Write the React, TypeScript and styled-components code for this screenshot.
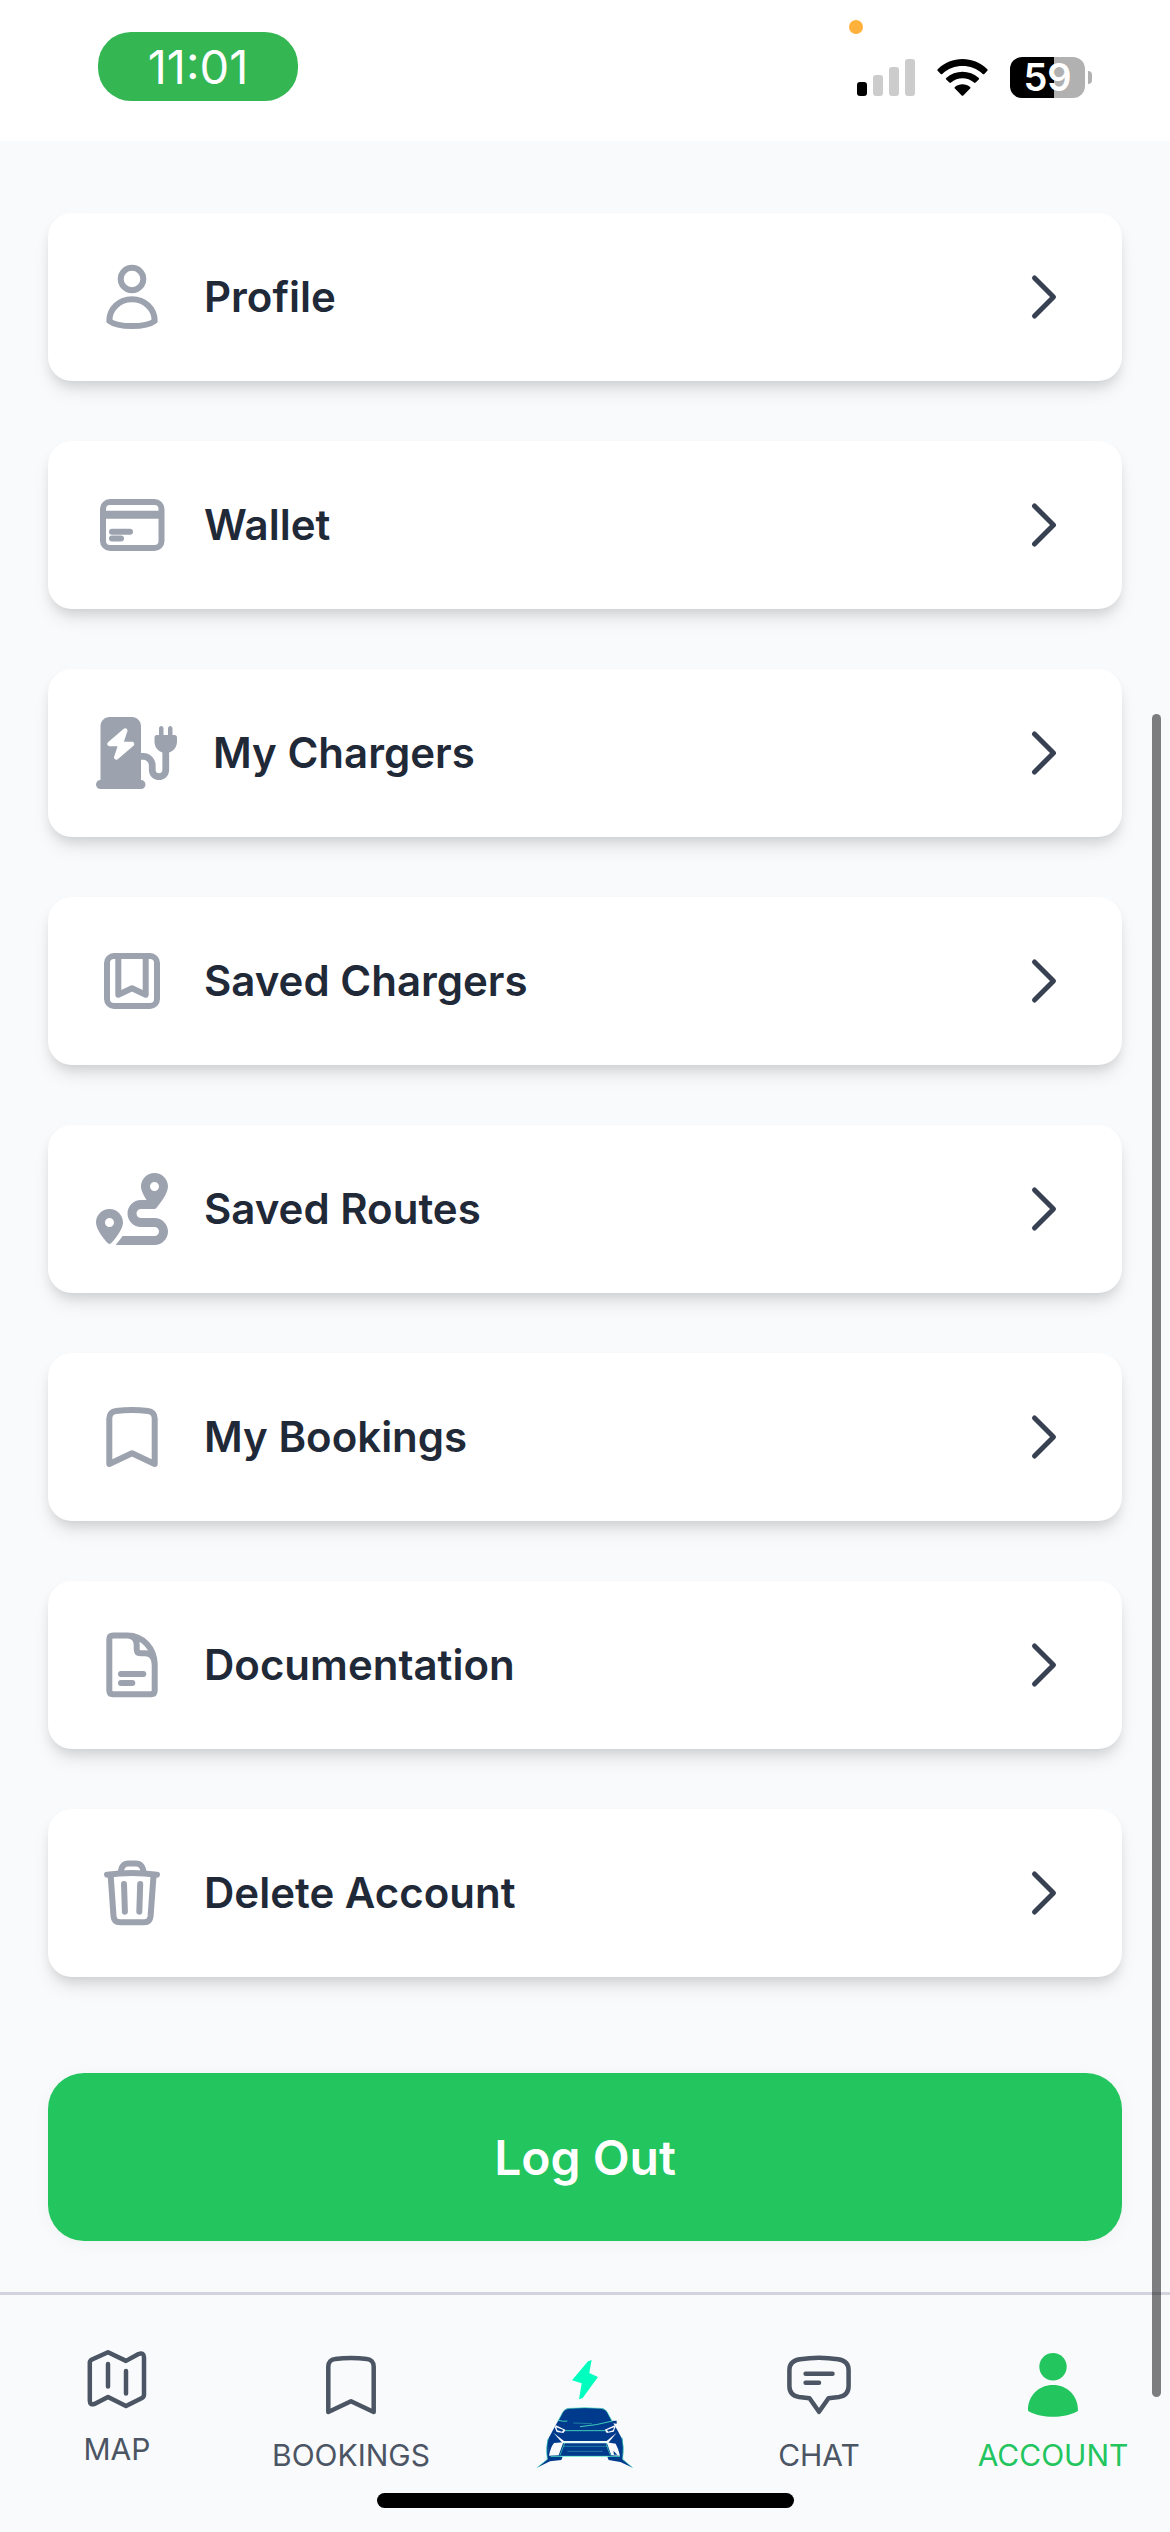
import React from "react";
import styled, { createGlobalStyle } from "styled-components";
import { FaChargingStation, FaRoute } from "react-icons/fa6";

const GlobalStyle = createGlobalStyle`
  *, *::before, *::after { box-sizing: border-box; }
  body {
    margin: 0;
    background: #f9fafc;
    font-family: Inter, "Liberation Sans", sans-serif;
  }
  button { font: inherit; border: 0; padding: 0; background: none; cursor: pointer; }
  a { text-decoration: none; }
  svg { display: block; flex: none; }
`;

const Screen = styled.div`
  position: relative;
  min-height: 100vh;
  display: flex;
  flex-direction: column;
`;

const StatusBar = styled.header`
  display: flex;
  justify-content: space-between;
  align-items: flex-start;
  height: 141px;
  padding: 32px 78px 0 98px;
  background: #fff;
`;

const TimePill = styled.time`
  width: 200px;
  height: 69px;
  border-radius: 33px;
  background: #34b653;
  color: #fff;
  font-size: 47px;
  line-height: 69px;
  text-align: center;
`;

const StatusIcons = styled.div`
  position: relative;
  display: flex;
  align-items: center;
  gap: 22px;
  padding-top: 25px;
`;

const MicDot = styled.span`
  position: absolute;
  top: -12px;
  left: -8px;
  width: 14px;
  height: 14px;
  border-radius: 50%;
  background: #ffb13b;
`;

const Battery = styled.span`
  display: flex;
  align-items: center;
  gap: 3px;
`;

const BatteryBody = styled.span<{ $level: number }>`
  width: 75px;
  height: 41px;
  border-radius: 12px;
  background: linear-gradient(to right, #000 ${(p) => p.$level}%, #b1b1b1 ${(p) => p.$level}%);
  color: #fff;
  font-size: 38px;
  font-weight: 600;
  line-height: 41px;
  text-align: center;
`;

const BatteryTip = styled.span`
  width: 4px;
  height: 13px;
  border-radius: 0 4px 4px 0;
  background: #b1b1b1;
`;

const Main = styled.main`
  flex: 1;
  display: flex;
  flex-direction: column;
  gap: 96px;
  padding: 72px 48px 51px;
`;

const Menu = styled.nav`
  display: flex;
  flex-direction: column;
  gap: 60px;
`;

const MenuRow = styled.a`
  display: flex;
  align-items: center;
  gap: 36px;
  padding: 48px;
  border-radius: 24px;
  background: #fff;
  color: #9ca3af;
  box-shadow: 0 12px 18px -3px rgba(0, 0, 0, 0.1), 0 6px 12px -3px rgba(0, 0, 0, 0.1);
`;

const MenuIcon = styled.span<{ $width?: number }>`
  flex: none;
  width: ${(p) => p.$width ?? 72}px;
  height: 72px;

  svg {
    width: 100%;
    height: 100%;
  }
`;

const MenuLabel = styled.span`
  flex: 1;
  color: #1f2937;
  font-size: 42px;
  font-weight: 600;
  line-height: 60px;
`;

const LogOutButton = styled.button`
  && {
    height: 168px;
    border-radius: 36px;
    background: #22c55e;
    color: #fff;
    font-size: 48px;
    font-weight: 600;
    box-shadow: 0 3px 18px rgba(0, 0, 0, 0.04);
  }
`;

const TabBar = styled.footer`
  display: flex;
  flex-direction: column;
  align-items: center;
  gap: 20px;
  padding-bottom: 24px;
  border-top: 3px solid #d3d3dd;
`;

const Tabs = styled.nav`
  align-self: stretch;
  display: flex;
  align-items: flex-start;
`;

const Tab = styled.a<{ $active?: boolean }>`
  flex: 1 1 0;
  display: flex;
  flex-direction: column;
  align-items: center;
  gap: 16px;
  height: 178px;
  padding-top: 54px;
  color: ${(p) => (p.$active ? "#22c55e" : "#4b5563")};
  font-size: 30px;
  line-height: 36px;
`;

const HomeIndicator = styled.div`
  width: 417px;
  height: 15px;
  border-radius: 8px;
  background: #000;
`;

const ScrollThumb = styled.div`
  position: absolute;
  top: 714px;
  right: 9px;
  bottom: 135px;
  width: 9px;
  border-radius: 5px;
  background: rgba(0, 0, 0, 0.5);
`;

type LineIconProps = { children: React.ReactNode; size?: number; stroke?: number };

const LineIcon = ({ children, size = 72, stroke = 6 }: LineIconProps) => (
  <svg
    width={size}
    height={size}
    viewBox={`0 0 ${size} ${size}`}
    fill="none"
    stroke="currentColor"
    strokeWidth={stroke}
    strokeLinecap="round"
    strokeLinejoin="round"
    aria-hidden="true"
  >
    {children}
  </svg>
);

const UserIcon = () => (
  <LineIcon>
    <circle cx="36" cy="18" r="11.3" />
    <path d="M13.3 60C13.3 47.5 23.5 38.3 36 38.3S58.7 47.5 58.7 60C50 66.8 22 66.8 13.3 60Z" />
  </LineIcon>
);

const WalletIcon = () => (
  <LineIcon>
    <rect x="7" y="13" width="58.5" height="46" rx="7" />
    <path d="M7 25.8H65.5" strokeWidth="8" strokeLinecap="butt" />
    <path d="M16 42.7H34M16 49.5H25" />
  </LineIcon>
);

const SavedIcon = () => (
  <LineIcon>
    <rect x="11" y="11" width="50" height="50" rx="7" />
    <path d="M22.3 12V49.7L36 43.3L49.7 49.7V12" />
  </LineIcon>
);

const BookmarkIcon = ({ stroke = 6 }: { stroke?: number }) => (
  <LineIcon stroke={stroke}>
    <path d="M13.3 63V17.5C13.3 13.3 16 10.4 20 10Q36 8 52 10C56 10.4 58.7 13.3 58.7 17.5V63L36 52.3Z" />
  </LineIcon>
);

const DocumentIcon = () => (
  <LineIcon>
    <path d="M31.3 6.5H17Q13.3 6.5 13.3 10.2V61.5Q13.3 65.3 17 65.3H55Q58.7 65.3 58.7 61.5V36C58.7 19.5 47 6.5 31.3 6.5Q40.7 6.5 40.7 16V20.5Q40.7 24.3 44.5 24.3H49Q58.7 24.3 58.7 36" />
    <path d="M25 45H47.3M25 54H36.3" />
  </LineIcon>
);

const TrashIcon = () => (
  <LineIcon>
    <path d="M11 17.7Q36 14.5 61 17.7" />
    <path d="M25 15C25 9.5 28 6.5 32.5 6.5H39.8C44.3 6.5 47.3 9.5 47.3 15" />
    <path d="M14.7 19L17.5 59Q18 65.3 24 65.3H48.2Q54 65.3 54.6 59L57.5 19" />
    <path d="M28 27L28.9 54.7M44.2 27L43.3 54.7" />
  </LineIcon>
);

const ChevronIcon = () => (
  <svg width="60" height="60" viewBox="0 0 60 60" fill="none" stroke="#374151" strokeWidth="5" strokeLinecap="round" strokeLinejoin="round" aria-hidden="true">
    <path d="M20.5 11L39.5 30L20.5 49" />
  </svg>
);

const MapIcon = () => (
  <LineIcon size={66} stroke={4.5}>
    <path d="M24 3.3L42 11.9L54.5 5Q60 3 60 8.5V45.5Q60 48 58 49L42 57L24 48L10.5 54.9Q5.8 56.5 5.8 51.5V13.5Q5.8 11.7 8 10.5Z" />
    <path d="M24 15V37.5M42 22V44.5" />
  </LineIcon>
);

const ChatIcon = () => (
  <LineIcon stroke={4.5}>
    <path d="M17 10.3Q36 7.2 55 10.3C61.5 11.3 65.6 14.5 65.6 21V37C65.6 43.5 62 47 56 47.9L45.5 49.2L36 62.8L26.5 49.2L16 47.9C10 47 6.4 43.5 6.4 37V21C6.4 14.5 10.5 11.3 17 10.3Z" />
    <path d="M22.6 24.7H49.5M22.6 33.7H36" />
  </LineIcon>
);

const AccountIcon = () => (
  <svg width="72" height="72" viewBox="0 0 72 72" fill="currentColor" aria-hidden="true">
    <circle cx="36" cy="17.8" r="13.7" />
    <path d="M11 61C11 46.5 22 36 36 36S61 46.5 61 61Q61 62 60 62.5C47 69.5 25 69.5 12 62.5Q11 62 11 61Z" />
  </svg>
);

const CarLogo = () => (
  <svg width="100" height="120" viewBox="105 27 300 360" role="img" aria-label="Home">
    <path fill="#00ffbf" d="M264 64L275 60L268 99L294 111L248 174L237 178L245 130L216 121Z" />
    <g fill="#003a8c">
      <path d="M174 243L188 217Q194 206 207 205Q255 201 303 205Q316 206 322 217L336 243L354 274L368 300L364 350H330L325 348H184L178 350H146L143 300L157 274Z" />
      <path d="M332 243L350 242L350 251L337 250ZM178 241L202 243L200 246L176 247Z" />
      <path d="M145 294Q136 322 142 358L111 383L150 364L184 360L188 350L148 346Q143 320 145 294Z" />
      <path d="M366 292Q373 322 368 358L398 383L361 366L326 360L322 350L362 346Q366 320 366 292Z" />
    </g>
    <g fill="#f9fafc">
      <path d="M162 309L190 307L176 346L147 347Q151 323 162 309Z" />
      <path d="M320 307L347 311Q355 325 360 347L334 346Z" />
      <path d="M168 256L197 270L190 279L170 276L164 262Z" />
      <path d="M344 256L314 269L320 279L341 275L346 262Z" />
      <path d="M160 278L192 303H320L350 278L324 310H188Z" />
    </g>
    <g fill="#003a8c">
      <path d="M169 262L190 270L186 275L172 271Z" />
      <path d="M342 262L321 270L325 275L339 271Z" />
      <path d="M340 332L352 344H342Z" />
    </g>
    <g fill="none" stroke="#4de8c4" strokeWidth="2">
      <path d="M176 241Q190 246 202 243M338 243Q290 256 240 260M196 272H316" strokeWidth="2.5" />
      <path d="M152 349H360" strokeWidth="2.5" />
      <path d="M220 249L276 251M190 319H322M202 334H308" opacity=".6" />
      <path d="M145 294Q137 322 142 358L111 383M366 292Q373 322 368 358L398 383" />
      <path d="M174 243L188 217Q194 206 207 205Q255 201 303 205Q316 206 322 217L336 243" />
      <path d="M194 309Q186 330 180 346M318 309Q324 330 332 346" />
    </g>
    <path fill="none" stroke="#d9fff5" strokeWidth="4" d="M188 307H322" />
  </svg>
);

const SignalIcon = () => (
  <svg width="58" height="37" viewBox="0 0 58 37" fill="#cccccc" aria-hidden="true">
    <rect x="0" y="23" width="10" height="14" rx="3" fill="#000" />
    <rect x="16" y="16" width="10" height="21" rx="3" />
    <rect x="32" y="8" width="10" height="29" rx="3" />
    <rect x="48" y="0" width="10" height="37" rx="3" />
  </svg>
);

const WifiIcon = () => (
  <svg width="51" height="37" viewBox="0 0 51 37" aria-hidden="true">
    <path d="M.7 10.2Q-.1 11 .7 11.8L3.7 14.9Q4.5 15.6 5.3 14.9C16.5 4.4 34.5 4.4 45.7 14.9Q46.5 15.6 47.3 14.9L50.3 11.8Q51.1 11 50.3 10.2C36.5-3.4 14.5-3.4.7 10.2Z" />
    <path d="M9.2 19Q8.5 19.8 9.2 20.5L12.4 23.6Q13.2 24.3 14 23.6C20.5 17.8 30.5 17.8 37 23.6Q37.8 24.3 38.6 23.6L41.8 20.5Q42.5 19.8 41.8 19C32.7 10.5 18.3 10.5 9.2 19Z" />
    <path d="M17.9 27.9Q17.1 28.7 17.9 29.5L24.7 36.4Q25.5 37.2 26.3 36.4L33.1 29.5Q33.9 28.7 33.1 27.9C28.9 24.2 22.1 24.2 17.9 27.9Z" />
  </svg>
);

type MenuItem = { label: string; icon: React.ReactNode; iconWidth?: number };

const menuItems: MenuItem[] = [
  { label: "Profile", icon: <UserIcon /> },
  { label: "Wallet", icon: <WalletIcon /> },
  { label: "My Chargers", icon: <FaChargingStation />, iconWidth: 81 },
  { label: "Saved Chargers", icon: <SavedIcon /> },
  { label: "Saved Routes", icon: <FaRoute /> },
  { label: "My Bookings", icon: <BookmarkIcon /> },
  { label: "Documentation", icon: <DocumentIcon /> },
  { label: "Delete Account", icon: <TrashIcon /> },
];

export default function App() {
  return (
    <>
      <GlobalStyle />
      <Screen>
        <StatusBar>
          <TimePill>11:01</TimePill>
          <StatusIcons>
            <MicDot />
            <SignalIcon />
            <WifiIcon />
            <Battery>
              <BatteryBody $level={59}>59</BatteryBody>
              <BatteryTip />
            </Battery>
          </StatusIcons>
        </StatusBar>
        <Main>
          <Menu aria-label="Account menu">
            {menuItems.map((item) => (
              <MenuRow key={item.label} href="#">
                <MenuIcon $width={item.iconWidth}>{item.icon}</MenuIcon>
                <MenuLabel>{item.label}</MenuLabel>
                <ChevronIcon />
              </MenuRow>
            ))}
          </Menu>
          <LogOutButton type="button">Log Out</LogOutButton>
        </Main>
        <TabBar>
          <Tabs aria-label="Main">
            <Tab href="#">
              <MapIcon />
              MAP
            </Tab>
            <Tab href="#">
              <BookmarkIcon stroke={4.5} />
              BOOKINGS
            </Tab>
            <Tab href="#">
              <CarLogo />
            </Tab>
            <Tab href="#">
              <ChatIcon />
              CHAT
            </Tab>
            <Tab href="#" $active aria-current="page">
              <AccountIcon />
              ACCOUNT
            </Tab>
          </Tabs>
          <HomeIndicator />
        </TabBar>
        <ScrollThumb />
      </Screen>
    </>
  );
}
